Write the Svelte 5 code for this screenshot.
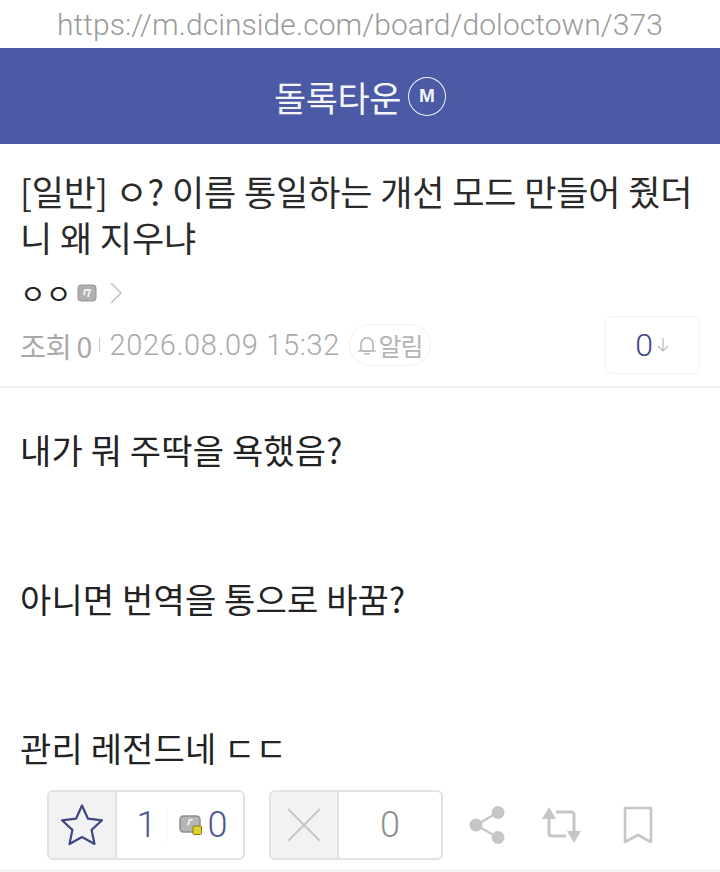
<script>
    const paragraphs = ['내가 뭐 주딱을 욕했음?', '아니면 번역을 통으로 바꿈?', '관리 레전드네 ㄷㄷ'];
</script>

<div class="page">
    <div class="url">https://m.dcinside.com/board/doloctown/373</div>

    <header class="gallery">
        <span class="gallery-name">돌록타운</span>
        <span class="badge">M</span>
    </header>

    <section class="head">
        <h1>[일반] ㅇ? 이름 통일하는 개선 모드 만들어 줬더니 왜 지우냐</h1>
        <div class="writer">
            <span class="nick">ㅇㅇ</span>
            <svg width="20" height="20" viewBox="0 0 20 20">
                <rect x="1" y="2" width="18" height="16" rx="3" fill="#b0b0b0" stroke="#949494" />
                <path d="M7 12l1-5h5l-2 7" fill="none" stroke="#eee" stroke-width="2" />
            </svg>
            <svg class="chevron" width="14" height="24" viewBox="0 0 14 24">
                <path d="M2 2l10 10L2 22" fill="none" stroke="#c4c4c4" stroke-width="1.6" />
            </svg>
        </div>
        <div class="meta">
            <span class="views">조회 0</span>
            <span class="sep"></span>
            <span class="date">2026.08.09 15:32</span>
            <span class="alarm">
                <svg width="20" height="22" viewBox="0 0 18 20">
                    <path d="M3.500 15V9a5.500 5.500 0 0 1 11 0v6q-5.500 1.500-11 0z M1.500 15.500h15 M7 18h4" fill="none" stroke="#b4b4b4" stroke-width="1.400" stroke-linecap="round" />
                </svg>
                알림
            </span>
            <span class="reply">0<svg width="14" height="16" viewBox="0 0 14 16"><path d="M7 1v13M2 9l5 5 5-5" fill="none" stroke="#b9b9bf" stroke-width="1.2" /></svg></span>
        </div>
    </section>

    <article class="body">
        {#each paragraphs as text}
            <p>{text}</p>
        {/each}
    </article>

    <div class="actions">
        <div class="vote">
            <span class="vote-icon">
                <svg width="46" height="46" viewBox="0 0 46 46">
                    <path d="M23 3.500l6 13.200 14 1.600-10.400 9.600 2.900 14.100L23 35l-12.500 7 2.900-14.100L3 18.300l14-1.600z" fill="none" stroke="#3f4681" stroke-width="2.200" stroke-linejoin="round" />
                </svg>
            </span>
            <span class="vote-count first">
                <span class="num">1</span>
                <span class="divider"></span>
                <svg width="24" height="22" viewBox="0 0 24 22">
                    <rect x="1" y="2" width="20" height="16" rx="3.500" fill="#b5b5b5" stroke="#8c8c8c" stroke-width="1.500" />
                    <path d="M9 11l1.500-5h3" fill="none" stroke="#eee" stroke-width="2" />
                    <rect x="14" y="12" width="8.500" height="8.500" rx="1" fill="#e2ce2b" stroke="#8a7c14" />
                </svg>
                <span class="num zero">0</span>
            </span>
        </div>
        <div class="vote down">
            <span class="vote-icon">
                <svg width="38" height="38" viewBox="0 0 38 38">
                    <path d="M3 3l32 32M35 3L3 35" stroke="#c6c6c6" stroke-width="1.800" />
                </svg>
            </span>
            <span class="vote-count"><span class="num">0</span></span>
        </div>
        <div class="tools">
            <svg width="38" height="40" viewBox="0 0 38 40">
                <circle cx="8" cy="20" r="6.500" fill="#c6c6c6" />
                <circle cx="30" cy="7.500" r="6.500" fill="#c6c6c6" />
                <circle cx="30" cy="32.500" r="6.500" fill="#c6c6c6" />
                <path d="M8 20L30 7.500M8 20l22 12.500" stroke="#c6c6c6" stroke-width="2.500" />
            </svg>
            <svg width="42" height="38" viewBox="0 0 42 38">
                <path d="M7 9v18q0 3 3 3h14M14 6h15q3 0 3 3v19" fill="none" stroke="#c6c6c6" stroke-width="3" />
                <path d="M0 13L7 1l7 12zM25 25h14l-7 12z" fill="#c6c6c6" />
            </svg>
            <svg class="bookmark" width="30" height="38" viewBox="0 0 30 38">
                <path d="M2 2h26v34L15 29 2 36z" fill="none" stroke="#c6c6c6" stroke-width="2.600" stroke-linejoin="round" />
            </svg>
        </div>
    </div>
</div>

<style>
    :global(body) {
        margin: 0;
        background: #fff;
    }

    .page {
        width: 720px;
        height: 872px;
        overflow: hidden;
        display: flex;
        flex-direction: column;
        font-family: "Noto Sans CJK KR", "Noto Sans", sans-serif;
        color: #222;
    }

    .url {
        height: 48px;
        flex: none;
        display: flex;
        justify-content: center;
        align-items: center;
        font-family: "Roboto", sans-serif;
        font-weight: 300;
        font-size: 30px;
        letter-spacing: 0.060px;
        color: #989b99;
    }

    .gallery {
        height: 96px;
        flex: none;
        background: #4a5aa5;
        display: flex;
        justify-content: center;
        align-items: center;
        gap: 7px;
        color: #f3f5fb;
    }

    .gallery-name {
        font-size: 35px;
        letter-spacing: -0.500px;
    }

    .badge {
        width: 38px;
        height: 39px;
        border: 1.500px solid #eef0f8;
        border-radius: 50%;
        box-sizing: border-box;
        display: flex;
        justify-content: center;
        align-items: center;
        font-family: "Liberation Sans", sans-serif;
        font-weight: 700;
        font-size: 19px;
    }

    .head {
        height: 244px;
        flex: none;
        box-sizing: border-box;
        padding: 24px 20px 0;
        border-bottom: 2px solid #f0f0f0;
    }

    h1 {
        margin: 0;
        font-weight: 400;
        font-size: 35px;
        line-height: 46px;
        letter-spacing: -0.080px;
        color: #2a2a2a;
    }

    .writer {
        height: 30px;
        margin-top: 18px;
        display: flex;
        align-items: center;
        gap: 5px;
    }

    .chevron {
        margin-left: 7px;
    }

    .nick {
        font-size: 28px;
        line-height: 30px;
        color: #222;
    }

    .meta {
        display: flex;
        align-items: center;
        height: 58px;
        margin-top: 8px;
        color: #a9a9a9;
        font-size: 28.500px;
    }

    .views {
        letter-spacing: -0.800px;
    }

    .sep {
        width: 1px;
        height: 14px;
        background: #c8c8c8;
        margin: 0 9px 0 8px;
    }

    .date {
        font-family: "Roboto", sans-serif;
        font-weight: 300;
        font-size: 29px;
        letter-spacing: 0.650px;
    }

    .alarm {
        margin-left: 9px;
        width: 82px;
        height: 42px;
        box-sizing: border-box;
        border: 1px solid #f0f0f0;
        border-radius: 21px;
        display: flex;
        align-items: center;
        justify-content: center;
        gap: 1px;
        font-size: 25px;
        letter-spacing: -1px;
        color: #b4b4b4;
    }

    .reply {
        margin-left: auto;
        width: 95px;
        height: 58px;
        box-sizing: border-box;
        border: 1px solid #f2f2f2;
        border-radius: 6px;
        display: flex;
        align-items: center;
        justify-content: center;
        gap: 3px;
        font-family: "Roboto", sans-serif;
        font-weight: 300;
        font-size: 32px;
        color: #3f4681;
    }

    .body {
        flex: 1;
        min-height: 0;
        padding: 40px 20px 0;
    }

    p {
        margin: 0 0 105px;
        height: 44px;
        font-size: 34px;
        line-height: 44px;
        letter-spacing: 0.150px;
        color: #222;
    }

    .actions {
        height: 82px;
        flex: none;
        box-sizing: border-box;
        padding: 0 0 0 47px;
        border-bottom: 3px solid #f3f3f3;
        display: flex;
        gap: 24px;
        align-items: flex-start;
    }

    .vote {
        height: 70px;
        box-sizing: border-box;
        border: 2px solid #e2e2e2;
        border-radius: 6px;
        display: flex;
        overflow: hidden;
        font-family: "Roboto", sans-serif;
        font-weight: 300;
        font-size: 36px;
        color: #4d5590;
    }

    .vote-icon {
        width: 66px;
        flex: none;
        background: #f2f2f2;
        border-right: 2px solid #e2e2e2;
        display: flex;
        align-items: center;
        justify-content: center;
    }

    .vote-count {
        width: 126px;
        box-sizing: border-box;
        display: flex;
        align-items: center;
        justify-content: center;
    }

    .first {
        padding-left: 4px;
    }

    .divider {
        width: 1px;
        height: 34px;
        background: #f4f4f4;
        margin: 0 12px 0 9px;
    }

    .zero {
        margin-left: 5px;
    }

    .down {
        color: #8f8f8f;
    }

    .down .vote-count {
        width: 102px;
    }

    .tools {
        display: flex;
        align-items: center;
        gap: 36px;
        height: 70px;
        margin-left: 1px;
    }

    .bookmark {
        margin-left: 3px;
    }
</style>
